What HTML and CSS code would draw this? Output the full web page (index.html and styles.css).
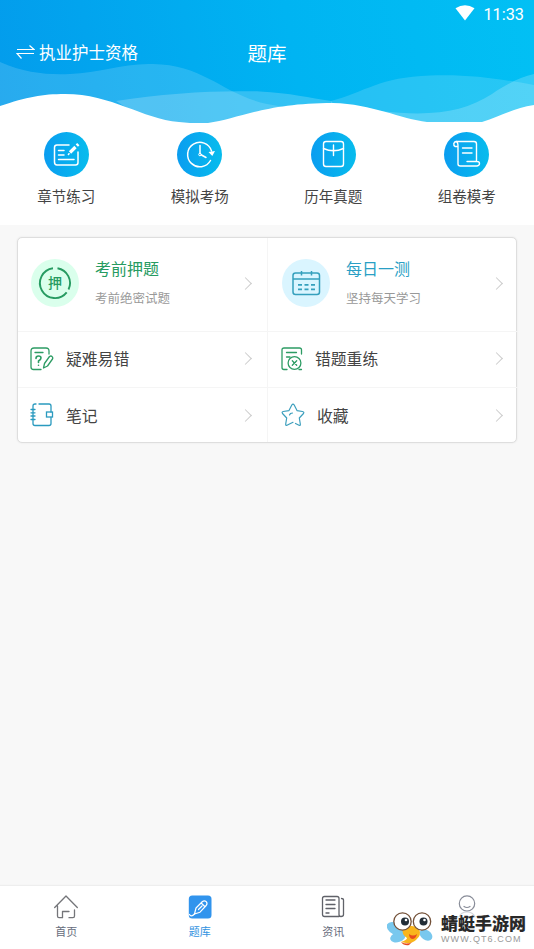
FILE: index.html
```html
<!DOCTYPE html>
<html lang="zh-CN">
<head>
<meta charset="utf-8">
<meta name="viewport" content="width=device-width, initial-scale=1">
<title>题库</title>
<link rel="stylesheet" href="styles.css">
</head>
<body>
<div class="app">
  <header class="header">
    <svg class="waves" viewBox="0 0 534 123" preserveAspectRatio="none">
      <g fill="#fff">
        <path opacity=".15" d="M0 62C25 73 48 75 70 74C100 73 122 63 153 64C205 65 222 94 267 104L290 108V123H0Z"/>
        <path opacity=".2" d="M116 101C165 93 220 90 260 91.500C290 93 310 98 331 101L350 123H150Z"/>
        <path opacity=".15" d="M331 101C365 92 380 77 430 75.500C470 74 500 79 534 85V123H331Z"/>
        <path opacity=".2" d="M380 111C432 117 464 112 492 94C507 84 520 77 534 74V123H380Z"/>
        <path d="M0 106C27 97 42 94 65 94C112 94 142 119 179 122L190 123H0ZM208 123C238 119 265 103 333 103C372 104 401 119 427 122H482C501 116 514 108 534 105V123Z"/>
      </g>
    </svg>
    <div class="status">
      <svg width="20" height="16" viewBox="0 0 20 16"><path fill="#fff" d="M.5 3.300Q10-2.700 19.500 3.300L10 15.500Z"/></svg>
      <span>11:33</span>
    </div>
    <div class="titlebar">
      <div class="subject">
        <svg width="19" height="16" viewBox="0 0 19 16" fill="none" stroke="#fff" stroke-width="1.200"><path d="M1 5.500H18L13.500 1.500M18 9.500H1L5.500 14.500"/></svg>
        <span>执业护士资格</span>
      </div>
      <h1>题库</h1>
    </div>
  </header>

  <nav class="shortcuts">
    <a class="shortcut">
      <svg viewBox="0 0 45 45"><circle cx="22.500" cy="22.500" r="22.500" fill="url(#disc)"/><g fill="none" stroke="#fff" stroke-width="1.500" stroke-linecap="round"><path d="M25 13H13Q10.500 13 10.500 15.500V30Q10.500 33 13 33H31.500Q34 33 34 30.500V20M14.500 18.500H20M14.500 23H20M14.500 27.500H30"/><path d="M26 20.500L31.500 15" stroke-width="3.200" stroke-linecap="butt"/><path d="M32.800 13.700L34.300 12.200" stroke-width="3.200" stroke-linecap="butt"/><path d="M25 21.700L24.400 22.500"/></g>
        <defs><linearGradient id="disc"><stop stop-color="#0a9df0"/><stop offset="1" stop-color="#07bced"/></linearGradient></defs></svg>
      <span>章节练习</span>
    </a>
    <a class="shortcut">
      <svg viewBox="0 0 45 45"><circle cx="22.500" cy="22.500" r="22.500" fill="url(#disc)"/><g fill="none" stroke="#fff" stroke-width="1.500" stroke-linecap="round"><path d="M34.500 19A12.200 12.200 0 1 0 33.500 28.500M23 13.500V21.500M24.500 23L29 25.500"/><circle cx="23" cy="22.500" r="1.300" stroke-width="1"/></g><path fill="#fff" d="M31.500 20L38 19L35.300 24Z"/></svg>
      <span>模拟考场</span>
    </a>
    <a class="shortcut">
      <svg viewBox="0 0 45 45"><circle cx="22.500" cy="22.500" r="22.500" fill="url(#disc)"/><g fill="none" stroke="#fff" stroke-width="1.400" stroke-linecap="round"><rect x="12.500" y="9.500" width="20" height="25" rx="2.500"/><path d="M12.500 16.500Q22.500 21 32.500 16.500M22.500 13V23.500M20 18.500H25"/></g></svg>
      <span>历年真题</span>
    </a>
    <a class="shortcut">
      <svg viewBox="0 0 45 45"><circle cx="22.500" cy="22.500" r="22.500" fill="url(#disc)"/><g fill="none" stroke="#fff" stroke-width="1.400" stroke-linecap="round" stroke-linejoin="round"><path d="M14 14.500H11Q9.500 13.500 9.800 11.500Q10.500 9.500 12.500 9.500H30Q32.500 9.500 32.500 12V29M14 14V32Q14 34 16.500 34H33Q35.500 33.500 35.500 31.500Q35.500 29.500 33 29.500H23M12 9.500Q14 10 14 14M18.500 16H28M18.500 21H28"/></g></svg>
      <span>组卷模考</span>
    </a>
  </nav>

  <main class="content">
    <section class="card">
      <a class="cell feature">
        <svg class="badge" viewBox="0 0 48 48"><circle cx="24" cy="24" r="24" fill="#daffec"/><path d="M26.500 9.200A15 15 0 0 1 37.500 30.500M35.700 33.400A15 15 0 1 1 22 9.200" fill="none" stroke="#269b61" stroke-width="1.900"/><text x="24" y="29" text-anchor="middle" class="badge-text">押</text></svg>
        <div class="copy"><strong class="green">考前押题</strong><small>考前绝密试题</small></div>
        <i class="chevron"></i>
      </a>
      <a class="cell feature">
        <svg class="badge" viewBox="0 0 48 48"><circle cx="24" cy="24" r="24" fill="#daf5ff"/><g fill="none" stroke="#35a0bd" stroke-width="1.500"><rect x="11" y="14" width="26.500" height="21.500" rx="2.500"/><path d="M11 20H37.500M19.500 12V16.500M29.500 12V16.500"/><path stroke-width="1.700" d="M16 25.800H20M22.500 25.800H26.500M29 25.800H33M16 30.300H20M22.500 30.300H26.500M29 30.300H33"/></g></svg>
        <div class="copy"><strong class="blue">每日一测</strong><small>坚持每天学习</small></div>
        <i class="chevron"></i>
      </a>
      <a class="cell">
        <svg class="icon" viewBox="0 0 24 24" fill="none" stroke="#2d9c64" stroke-width="1.300" stroke-linecap="round" stroke-linejoin="round"><path d="M19 7V4Q19 1 16 1H4Q1 1 1 4V20Q1 22.500 3.500 22.500H11M5 5.500H13"/><path stroke-width="1.600" d="M6 11.500Q6 9 8.500 9Q11 9 11 11Q11 12.500 8.500 14V15.500M8.500 18.200V18.300"/><path d="M13.500 21L14.500 16.500L19.500 9.500Q21 8.500 22 9.500Q23.200 10.500 22.500 12L17.500 19L13.500 21Z"/></svg>
        <span>疑难易错</span><i class="chevron"></i>
      </a>
      <a class="cell">
        <svg class="icon" viewBox="0 0 24 24" fill="none" stroke="#2d9c64" stroke-width="1.300" stroke-linecap="round"><path d="M20.500 7V3Q20.500 1 18.500 1H3Q1 1 1 3V20.500Q1 22.500 3 22.500H6M5.500 5.500H15.500M5.500 10H9"/><circle cx="13.500" cy="16" r="6.400"/><path d="M11.300 13.800L15.700 18.200M15.700 13.800L11.300 18.200M18 22.500H20.500"/></svg>
        <span class="mistake">错题重练</span><i class="chevron"></i>
      </a>
      <a class="cell">
        <svg class="icon" viewBox="0 0 24 24" fill="none" stroke="#2a9abf" stroke-width="1.300" stroke-linecap="round"><path d="M9 1H19Q21 1 21 3V9M21 14.500V20.500Q21 22.500 19 22.500H5Q3 22.500 3 20.500V3Q3 1 5 1H6M1 6.500H5M1 9.800H5M1 13H5M1 16.500H5"/><rect x="16.500" y="9" width="6" height="5"/></svg>
        <span>笔记</span><i class="chevron"></i>
      </a>
      <a class="cell">
        <svg class="icon" viewBox="0 0 24 24" fill="none" stroke="#3c9fbd" stroke-width="1.200" stroke-linecap="round" stroke-linejoin="round"><path d="M14.500 20.500L18 22.300Q19.600 22.800 19.300 21L18.300 15L22.500 10.500Q23.500 9 21.500 8.500L16 7.600L13.200 2Q12 .2 10.800 2L8 7.600L2.200 8.500Q.5 9 1.500 10.500L5.700 15L4.700 21Q4.600 22.800 6 22.300L12 19.300M8.500 12Q9 10 11.500 10"/></svg>
        <span class="favorite">收藏</span><i class="chevron"></i>
      </a>
    </section>
  </main>

  <footer class="tabs">
    <a class="tab">
      <svg viewBox="0 0 24 24" fill="none" stroke="#747579" stroke-width="1.300" stroke-linecap="round" stroke-linejoin="round"><path d="M.7 12.500L12 1L23.300 12.500M3.500 11V21Q3.500 22.700 5 22.700H8.500V16.500H15M15 22.700H19Q20.500 22.700 20.500 21V15"/></svg>
      <span>首页</span>
    </a>
    <a class="tab active">
      <svg viewBox="0 0 24 24"><rect x=".8" y=".5" width="22.700" height="23" rx="3.500" fill="#3194ed"/><g fill="none" stroke="#fff" stroke-width="1.200" stroke-linejoin="round" stroke-linecap="round"><path d="M6.500 19L8 13L14.500 6.500Q16.500 5 18.200 6.700Q19.800 8.500 18.200 10.500L12 17.200L6.500 19ZM13.200 8L17 11.700M10.500 14.500L14 11"/><path d="M1.500 19.500Q3 22.500 6.500 19"/></g></svg>
      <span>题库</span>
    </a>
    <a class="tab">
      <svg viewBox="0 0 24 24" fill="none" stroke="#606269" stroke-width="1.300" stroke-linecap="round"><path d="M18 21.500H3.500Q1.500 21.500 1.500 19.500V3.500Q1.500 1.500 3.500 1.500H16Q18 1.500 18 3.500V19.500Q18 21.500 20 21.500Q22.500 21.500 22.500 19.500V5Q22.500 3.500 20.500 3.500M5 5H14M5 9.500H14M5 13.500H14M5 18H8"/></svg>
      <span>资讯</span>
    </a>
    <a class="tab">
      <svg viewBox="0 0 24 24" fill="none" stroke="#888c98" stroke-width="1.200" stroke-linecap="round"><circle cx="12" cy="8.500" r="7.700"/><path d="M9 11.500Q12 13.500 15 11.500"/><path stroke="#d5d7dc" d="M4 22Q6 17 12 17Q18 17 20 22"/></svg>
    </a>
    <div class="watermark">
      <svg width="48" height="36" viewBox="0 0 48 36">
        <g fill="#79c8ee"><ellipse cx="9" cy="18" rx="10" ry="6" transform="rotate(28 9 18)"/><ellipse cx="11" cy="26" rx="8" ry="5" transform="rotate(-20 11 26)"/><ellipse cx="39" cy="24" rx="7" ry="5" transform="rotate(35 39 24)"/></g>
        <path fill="#f9b51c" d="M16 17Q24 12 32 18Q35 24 29 29Q24 34 14 31Q20 29 20 27Q14 23 16 17Z"/>
        <path fill="#e84b1d" d="M22 23Q26 26 30 23Q29 28 25 28Q22 27 22 23ZM14 31Q20 34 25 31L22 34Q17 35 14 31Z"/>
        <g fill="#fff" stroke="#735038" stroke-width="1.300"><circle cx="15.500" cy="10.500" r="8.700"/><circle cx="35" cy="10.500" r="8.700"/></g>
        <g fill="#222d36"><circle cx="18" cy="10.500" r="4"/><circle cx="36.500" cy="10.500" r="4"/></g><g fill="#fff"><circle cx="19" cy="9" r="1.300"/><circle cx="37.500" cy="9" r="1.300"/></g>
      </svg>
      <div class="brand"><b>蜻蜓手游网</b><small>WWW.QT6.COM</small></div>
    </div>
  </footer>
</div>
</body>
</html>
```

FILE: styles.css
```css
* {
  box-sizing: border-box;
}

body {
  margin: 0;
  font-family: Roboto, "Noto Sans CJK SC", sans-serif;
  color: #444;
  background: #f8f8f8;
}

.app {
  height: 949px;
  display: flex;
  flex-direction: column;
}

.header {
  position: relative;
  height: 123px;
  color: #fff;
  background: linear-gradient(80deg, #039cec, #00b4f2 55%, #02c0f4);
}

.waves {
  position: absolute;
  inset: 0;
  width: 100%;
  height: 100%;
}

.status {
  position: relative;
  height: 28px;
  padding: 0 10px 0 0;
  display: flex;
  align-items: center;
  justify-content: flex-end;
  gap: 8px;
  font-size: 16.3px;
}

.status svg {
  margin-bottom: 2px;
}

.titlebar {
  position: relative;
  height: 48px;
  display: grid;
  grid-template-columns: 1fr auto 1fr;
  align-items: center;
}

.subject {
  display: flex;
  align-items: center;
  gap: 4px;
  padding-left: 16px;
  font-size: 16.5px;
}

.titlebar h1 {
  margin: 0;
  font-size: 19.5px;
  font-weight: 400;
}

.shortcuts {
  height: 102px;
  padding-top: 9px;
  display: grid;
  grid-template-columns: repeat(4, 1fr);
  background: #fff;
}

.shortcut {
  display: flex;
  flex-direction: column;
  align-items: center;
  gap: 10px;
  margin-left: -1px;
  font-size: 14.5px;
  line-height: 22px;
}

.shortcut svg {
  width: 45px;
  height: 45px;
}

.content {
  flex: 1;
  padding: 12px 17px;
}

.card {
  height: 206px;
  display: grid;
  grid-template-columns: 250px 250px;
  grid-template-rows: 94px 56px 54px;
  border: 1px solid #dedede;
  border-radius: 5px;
  background: #fff;
  box-shadow: 0 0 2px #e4e4e4;
}

.cell {
  display: flex;
  align-items: center;
  gap: 12px;
  padding: 0 17px 2px 12px;
  font-size: 15.8px;
  border-bottom: 1px solid #f5f5f5;
}

.cell:nth-child(odd) {
  border-right: 1px solid #f5f5f5;
}

.cell:nth-child(even) {
  padding-left: 13px;
}

.cell:nth-last-child(-n + 2) {
  padding-bottom: 0;
  border-bottom: 0;
}

.cell.feature {
  gap: 16px;
  padding-left: 13px;
}

.cell.feature:nth-child(even) {
  padding-left: 14px;
}

.badge {
  width: 48px;
  height: 48px;
  margin-top: -1px;
}

.badge-text {
  font-size: 14px;
  font-weight: 500;
  fill: #269b61;
}

.copy {
  display: flex;
  flex-direction: column;
  gap: 6px;
}

.copy strong {
  font-size: 16px;
  font-weight: 400;
  line-height: 24px;
}

.copy small {
  margin-top: 1px;
  font-size: 12.5px;
  line-height: 20px;
  color: #999;
}

.green {
  color: #269b61;
}

.blue {
  color: #2a9fc5;
}

.icon {
  width: 24px;
  height: 24px;
}

.mistake {
  margin-left: -2px;
}

.chevron {
  width: 9px;
  height: 9px;
  margin-left: auto;
  border: solid #ccc;
  border-width: 1.3px 1.3px 0 0;
  transform: rotate(45deg);
}

.tabs {
  position: relative;
  height: 63px;
  padding-top: 9px;
  display: grid;
  grid-template-columns: repeat(4, 1fr);
  background: #fff;
  box-shadow: 0 -1px 1px #eee;
}

.tab {
  display: flex;
  flex-direction: column;
  align-items: center;
  gap: 5px;
  margin-left: -1px;
  font-size: 11px;
  line-height: 18px;
  color: #666c7c;
}

.tab svg {
  width: 24px;
  height: 24px;
}

.active {
  color: #3293df;
}

.watermark {
  position: absolute;
  right: 8px;
  bottom: 2px;
  display: flex;
  align-items: center;
  gap: 6px;
}

.brand {
  display: flex;
  flex-direction: column;
  color: #292929;
}

.brand b {
  font-size: 17px;
  font-weight: 900;
  line-height: 20px;
}

.brand small {
  font-family: "Liberation Sans", sans-serif;
  font-size: 9px;
  line-height: 11px;
  letter-spacing: 1.1px;
  color: #999;
}
```
